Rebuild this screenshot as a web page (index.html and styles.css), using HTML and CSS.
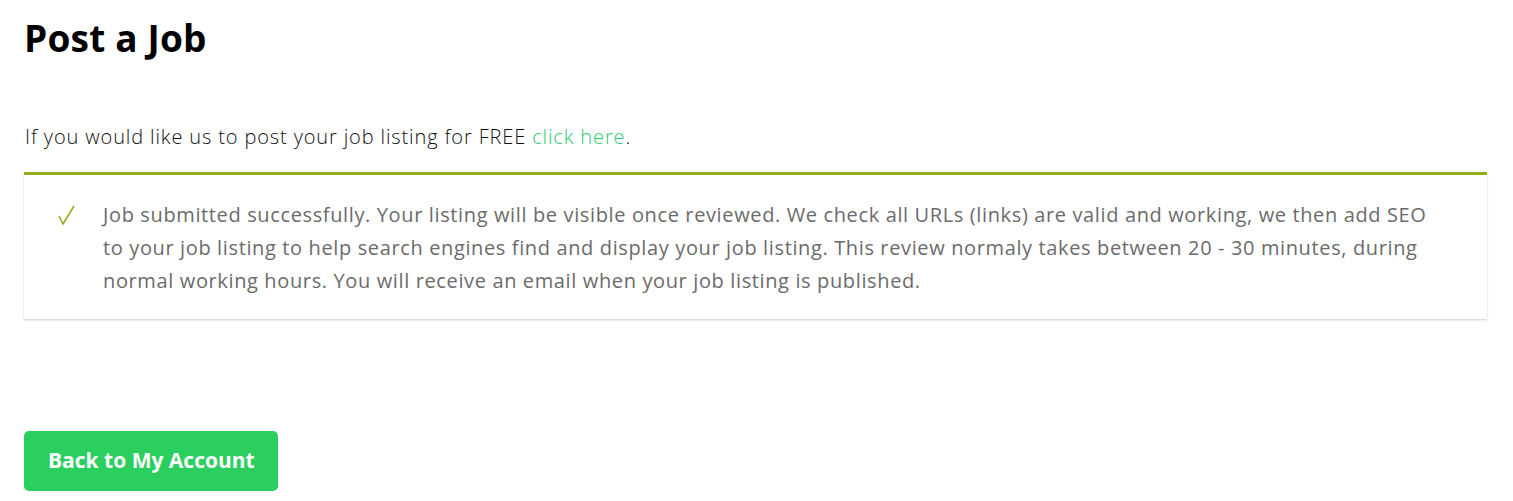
FILE: index.html
```html
<!DOCTYPE html>
<html lang="en">
<head>
  <meta charset="UTF-8" />
  <title>Post a Job</title>
  <link rel="stylesheet" href="styles.css">
</head>
<body>
  <div class="page">
    <h1>Post a Job</h1>
    <p class="intro">If you would like us to post your job listing for FREE <a href="#">click here</a>.</p>

    <div class="notice">
      <span class="tick">
        <svg width="18" height="20" viewBox="0 0 18 20"><polyline points="1,11 5,19 16,1" fill="none" stroke="#8fae1b" stroke-width="1.6"/></svg>
      </span>
      <p>Job submitted successfully. Your listing will be visible once reviewed. We check all URLs (links) are valid and working, we then add SEO to your job listing to help search engines find and display your job listing. This review normaly takes between 20 - 30 minutes, during normal working hours. You will receive an email when your job listing is published.</p>
    </div>

    <a class="btn" href="#">Back to My Account</a>
  </div>
</body>
</html>
```

FILE: styles.css
```css
body {
  margin: 0;
  font-family: "Open Sans", Lato, sans-serif;
  color: #111;
  background: #fff;
}
.page {
  padding: 0 26px 0 24px;
}
h1 {
  margin: 0;
  padding-top: 14px;
  font-size: 37px;
  font-weight: 700;
  color: #000;
  line-height: 48px;
  letter-spacing: 0.2px;
}
.intro {
  margin: 62px 0 0 1px;
  font-size: 20px;
  font-weight: 300;
  line-height: 26px;
  letter-spacing: 0.87px;
}
.intro a {
  color: #2ecc71;
  text-decoration: none;
}
.notice {
  margin-top: 22px;
  border-top: 3px solid #8fae1b;
  box-shadow: 0 1px 2px rgba(0, 0, 0, 0.2);
  display: flex;
  padding: 23px 46px 22px 34px;
}
.tick {
  flex: 0 0 45px;
  padding-top: 7px;
}
.tick svg {
  display: block;
}
.notice p {
  margin: 0;
  color: #6b6b6b;
  font-size: 20px;
  font-weight: 400;
  line-height: 33px;
  letter-spacing: 0.63px;
}
.btn {
  display: inline-block;
  margin-top: 112px;
  background: #2bcf5f;
  color: #fff;
  font-size: 21px;
  font-weight: 700;
  text-decoration: none;
  padding: 16px 23px 17px 24px;
  border-radius: 5px;
  line-height: 27px;
}
```
